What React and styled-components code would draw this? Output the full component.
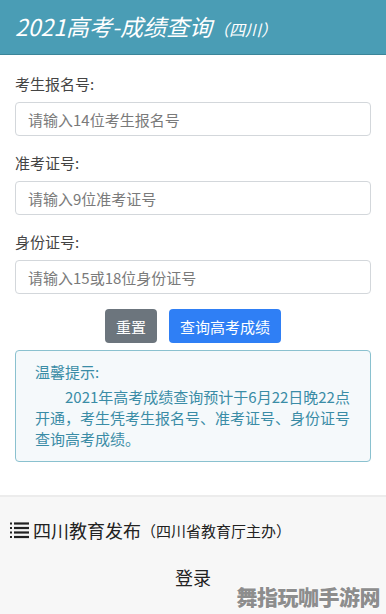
import React from "react";
import styled, { createGlobalStyle } from "styled-components";

const Global = createGlobalStyle`
  html, body { margin: 0; padding: 0; background: #fff; }
  body { font-family: "Noto Sans CJK SC", "Noto Sans", sans-serif; }
  * { box-sizing: border-box; }
`;

const Page = styled.div`
  position: relative;
  width: 386px;
  height: 614px;
  overflow: hidden;
  display: flex;
  flex-direction: column;
`;

const Header = styled.header`
  height: 55px;
  background: #4a9db5;
  border-bottom: 1px solid #3b8599;
  display: flex;
  align-items: center;
  padding: 0 15px 2px;
`;

const Title = styled.h1`
  margin: 0;
  font-size: 23px;
  font-weight: 400;
  font-style: italic;
  color: #fff;
  display: flex;
  align-items: baseline;
`;

const TitleSub = styled.span`
  font-size: 16px;
  margin-left: 1px;
`;

const Form = styled.form`
  padding: 18px 15px 0;
  display: flex;
  flex-direction: column;
`;

const Group = styled.div`
  display: flex;
  flex-direction: column;
  margin-bottom: 16px;
`;

const Label = styled.label`
  font-size: 15px;
  line-height: 22px;
  color: #444;
  margin-bottom: 7px;
`;

const Input = styled.input`
  height: 34px;
  width: 100%;
  border: 1px solid #d3d7db;
  border-radius: 4px;
  padding: 0 12px;
  font-size: 15px;
  font-family: inherit;
  color: #333;
  outline: none;
  &::placeholder { color: #7a7a7a; }
`;

const Buttons = styled.div`
  display: flex;
  justify-content: center;
  gap: 12px;
  margin-top: -1px;
`;

const Button = styled.button`
  height: 34px;
  padding: 0 11px;
  border: none;
  border-radius: 4px;
  font-size: 15px;
  font-family: inherit;
  color: #fff;
  background: ${(p) => (p.$primary ? "#2f7ff5" : "#6c757d")};
`;

const Alert = styled.div`
  margin-top: 7px;
  border: 1px solid #8ac1cf;
  border-radius: 4px;
  background: #f5f9fb;
  color: #3a8ca6;
  padding: 10px 19px 12px;
  font-size: 15px;
`;

const AlertTitle = styled.div`
  line-height: 22px;
`;

const AlertText = styled.p`
  margin: 3px 0 0;
  line-height: 21px;
  text-indent: 2em;
`;

const Footer = styled.footer`
  margin-top: 33px;
  flex: 1;
  border-top: 2px solid #ececec;
  background: #f7f7f7;
  display: flex;
  flex-direction: column;
`;

const FooterHead = styled.div`
  display: flex;
  align-items: center;
  padding: 20px 0 0 10px;
  color: #222;
`;

const FooterName = styled.span`
  font-size: 18px;
  margin-left: 4px;
`;

const FooterSub = styled.span`
  font-size: 15px;
`;

const Login = styled.div`
  text-align: center;
  font-size: 18px;
  color: #222;
  margin-top: 21px;
`;

const Watermark = styled.div`
  position: absolute;
  right: 6px;
  bottom: 3px;
  font-size: 21px;
  font-weight: 900;
  color: #8d8d8d;
  letter-spacing: -0.5px;
  text-shadow: 0 0 2px #fff, 0 0 2px #fff;
`;

const ListIcon = () => (
  <svg width="19" height="17" viewBox="0 0 19 17">
    {[1.5, 6, 10.5, 15].map((y) => (
      <g key={y}>
        <rect x="0" y={y - 1} width="2" height="2" fill="#222" />
        <rect x="4" y={y - 1.1} width="15" height="2.2" fill="#222" />
      </g>
    ))}
  </svg>
);

export default function App() {
  return (
    <Page>
      <Global />
      <Header>
        <Title>
          2021高考-成绩查询<TitleSub>（四川）</TitleSub>
        </Title>
      </Header>
      <Form onSubmit={(e) => e.preventDefault()}>
        <Group>
          <Label>考生报名号:</Label>
          <Input placeholder="请输入14位考生报名号" />
        </Group>
        <Group>
          <Label>准考证号:</Label>
          <Input placeholder="请输入9位准考证号" />
        </Group>
        <Group>
          <Label>身份证号:</Label>
          <Input placeholder="请输入15或18位身份证号" />
        </Group>
        <Buttons>
          <Button type="button">重置</Button>
          <Button type="button" $primary>查询高考成绩</Button>
        </Buttons>
        <Alert>
          <AlertTitle>温馨提示:</AlertTitle>
          <AlertText>
            2021年高考成绩查询预计于6月22日晚22点开通，考生凭考生报名号、准考证号、身份证号查询高考成绩。
          </AlertText>
        </Alert>
      </Form>
      <Footer>
        <FooterHead>
          <ListIcon />
          <FooterName>四川教育发布</FooterName>
          <FooterSub>（四川省教育厅主办）</FooterSub>
        </FooterHead>
        <Login>登录</Login>
      </Footer>
      <Watermark>舞指玩咖手游网</Watermark>
    </Page>
  );
}
